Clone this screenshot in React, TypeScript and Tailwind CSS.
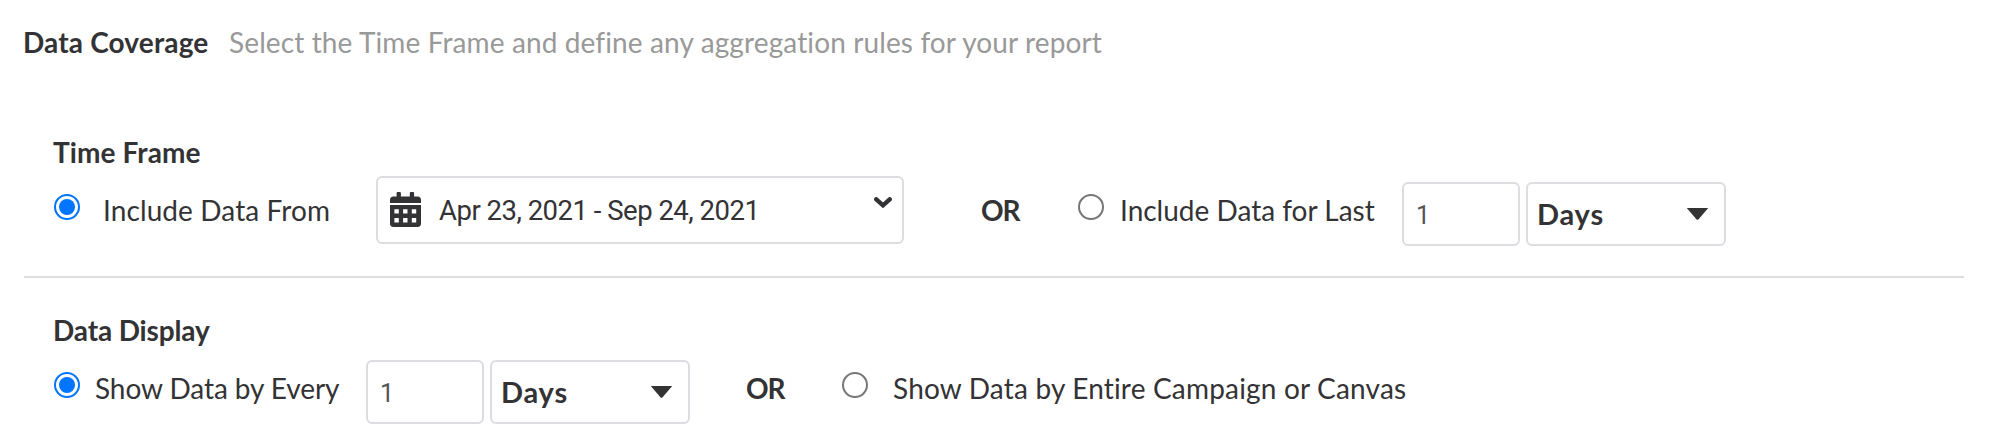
import React from "react";

function Radio({ checked = false }: { checked?: boolean }) {
  return checked ? (
    <span className="flex size-[26px] shrink-0 items-center justify-center rounded-full border-2 border-[#0075ff] bg-white">
      <span className="size-4 rounded-full bg-[#0075ff]" />
    </span>
  ) : (
    <span className="size-[26px] shrink-0 rounded-full border-2 border-[#767676] bg-white" />
  );
}

function CountAndUnit() {
  return (
    <div className="flex shrink-0 gap-[6px]">
      <div className="flex h-16 w-[118px] items-center rounded-md border-2 border-[#dcdce1] pt-[3px] pl-[12px] font-['Roboto',sans-serif] text-[25px] text-[#555555]">
        1
      </div>
      <div className="flex h-16 w-[200px] items-center justify-between rounded-md border-2 border-[#dcdce1] pl-[9px] pr-[15px]">
        <span className="pb-px text-[29px] leading-[34px] font-bold tracking-[0.8px]">Days</span>
        <svg className="mb-px h-[12px] w-[23px]" viewBox="0 0 23 12" fill="#333333">
          <path d="M0.8 0H22.2L12.6 11.2Q11.5 12.2 10.4 11.2Z" />
        </svg>
      </div>
    </div>
  );
}

function CalendarIcon() {
  return (
    <svg className="h-[35px] w-[31px] shrink-0" viewBox="0 0 31 35" fill="#333335">
      <path d="M6.6 4.5V1Q6.6 0 7.6 0H9.9Q10.9 0 10.9 1V4.5H19.8V1Q19.8 0 20.8 0H23.1Q24.1 0 24.1 1V4.5H27.5Q31 4.5 31 8V11H0V8Q0 4.5 3.5 4.5Z" />
      <path
        fillRule="evenodd"
        d="M0 13H31V31.6Q31 35 27.6 35H3.4Q0 35 0 31.6ZM4.4 17.2V21.6H8.8V17.2ZM13.1 17.2V21.6H17.5V17.2ZM21.8 17.2V21.6H26.2V17.2ZM4.4 26V30.4H8.8V26ZM13.1 26V30.4H17.5V26ZM21.8 26V30.4H26.2V26Z"
      />
    </svg>
  );
}

export default function App() {
  return (
    <main className="h-[444px] w-[1990px] overflow-hidden bg-white pr-[26px] pl-[24px] pt-[25px] font-['Lato',sans-serif] text-[28px] leading-[34px] whitespace-nowrap text-[#333335]">
      <header className="flex h-[34px]">
        <h1 className="-ml-px w-[205px] shrink-0 font-bold tracking-[0.15px]">Data Coverage</h1>
        <p className="ml-px tracking-[0.12px] text-[#999999]">
          Select the Time Frame and define any aggregation rules for your report
        </p>
      </header>

      <section className="mt-[76px] h-[143px] border-b-2 border-[#dcdce1] pl-[30px]">
        <h2 className="-ml-px h-[34px] font-bold tracking-[0.1px]">Time Frame</h2>
        <div className="mt-[7px] flex items-start">
          <div className="mt-[18px] flex w-[322px] shrink-0">
            <Radio checked />
            <span className="-mt-px ml-[23px] tracking-[0.1px]">Include Data From</span>
          </div>
          <div className="flex h-[68px] w-[528px] shrink-0 items-start rounded-md border-2 border-[#dcdce1] pl-[12px] pr-[10px]">
            <div className="mt-[14px] flex">
              <CalendarIcon />
            </div>
            <span className="mt-[16px] ml-[18px] flex-1 font-['Roboto',sans-serif] text-[27.5px] tracking-[-0.5px]">
              Apr 23, 2021 - Sep 24, 2021
            </span>
            <svg className="mt-[19px] h-[12px] w-[18px]" viewBox="0 0 18 12" fill="none" stroke="#333335" strokeWidth="4.4">
              <path d="M2.3 2.3L9 8.3L15.7 2.3" strokeLinecap="round" />
            </svg>
          </div>
          <span className="mt-[17px] ml-[77px] w-[97px] shrink-0 font-bold tracking-[-1px]">OR</span>
          <div className="mt-[18px] flex w-[324px] shrink-0">
            <Radio />
            <span className="-mt-px ml-[16px]">Include Data for Last</span>
          </div>
          <div className="mt-[6px]">
            <CountAndUnit />
          </div>
        </div>
      </section>

      <section className="mt-[35px] pl-[30px]">
        <h2 className="-ml-px h-[34px] font-bold tracking-[-0.15px]">Data Display</h2>
        <div className="mt-[13px] flex items-start">
          <div className="mt-[12px] flex w-[312px] shrink-0">
            <Radio checked />
            <span className="-mt-px ml-[15px] tracking-[-0.08px]">Show Data by Every</span>
          </div>
          <CountAndUnit />
          <span className="mt-[11px] ml-[56px] w-[96px] shrink-0 font-bold tracking-[-1px]">OR</span>
          <div className="mt-[12px] flex">
            <Radio />
            <span className="-mt-px ml-[25px] tracking-[0.18px]">Show Data by Entire Campaign or Canvas</span>
          </div>
        </div>
      </section>
    </main>
  );
}
